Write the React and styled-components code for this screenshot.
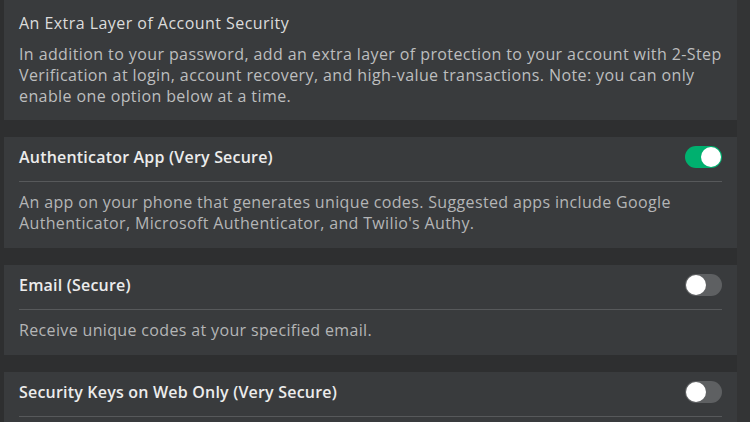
import React from 'react';
import styled, { createGlobalStyle } from 'styled-components';

const GlobalStyle = createGlobalStyle`
    html, body {
        margin: 0;
        padding: 0;
        background: #2e2f30;
        overflow: hidden;
    }
    body {
        font-family: "Open Sans", "Liberation Sans", sans-serif;
        -webkit-font-smoothing: antialiased;
    }
`;

const Page = styled.div`
    width: 750px;
    height: 422px;
    display: flex;
    overflow: hidden;
    background: #2e2f30;
`;

const Column = styled.div`
    width: 733px;
    margin-left: 4px;
    display: flex;
    flex-direction: column;
    gap: 17px;
`;

const Gutter = styled.div`
    flex: 1;
    background: #333435;
`;

const Panel = styled.section`
    background: #393b3d;
    padding: ${props => props.$intro ? '12px 15px 13px' : '0 15px'};
`;

const Heading = styled.h2`
    margin: 0 0 10px;
    font-size: 16px;
    line-height: 22px;
    font-weight: 400;
    letter-spacing: 0.45px;
    color: #dcdcdc;
`;

const Body = styled.p`
    margin: 0;
    font-size: 16px;
    line-height: 21px;
    letter-spacing: 0.4px;
    color: #bdbebf;
`;

const TitleRow = styled.div`
    display: flex;
    align-items: center;
    justify-content: space-between;
    padding: 9px 0 13px;
    border-bottom: 1px solid #57595b;
`;

const Title = styled.h3`
    margin: 0;
    font-size: 16px;
    line-height: 22px;
    font-weight: 600;
    letter-spacing: 0.2px;
    color: #ececec;
`;

const Description = styled.p`
    margin: 0;
    padding: 10px 0 14px;
    font-size: 16px;
    line-height: 21px;
    letter-spacing: 0.35px;
    color: #b4b5b6;
`;

const Toggle = styled.span`
    position: relative;
    flex-shrink: 0;
    display: inline-block;
    width: 37px;
    height: 22px;
    border-radius: 11px;
    background: ${props => props.$on ? '#00b06f' : '#5e6062'};

    &::after {
        content: '';
        position: absolute;
        top: 1px;
        left: ${props => props.$on ? '16px' : '1px'};
        width: 20px;
        height: 20px;
        border-radius: 50%;
        background: #ffffff;
    }
`;

const options = [
    {
        title: 'Authenticator App (Very Secure)',
        on: true,
        text: "An app on your phone that generates unique codes. Suggested apps include Google Authenticator, Microsoft Authenticator, and Twilio's Authy."
    },
    {
        title: 'Email (Secure)',
        on: false,
        text: 'Receive unique codes at your specified email.'
    },
    {
        title: 'Security Keys on Web Only (Very Secure)',
        on: false,
        text: 'Use a security key to verify your identity when logging in on the web.'
    }
];

const App = () => {
    return (
        <Page>
            <GlobalStyle />
            <Column>
                <Panel $intro>
                    <Heading>An Extra Layer of Account Security</Heading>
                    <Body>
                        In addition to your password, add an extra layer of protection to your account with 2-Step
                        Verification at login, account recovery, and high-value transactions. Note: you can only
                        enable one option below at a time.
                    </Body>
                </Panel>
                {options.map((opt, index) => (
                    <Panel key={index}>
                        <TitleRow>
                            <Title>{opt.title}</Title>
                            <Toggle $on={opt.on} />
                        </TitleRow>
                        <Description>{opt.text}</Description>
                    </Panel>
                ))}
            </Column>
            <Gutter />
        </Page>
    );
};

export default App;
